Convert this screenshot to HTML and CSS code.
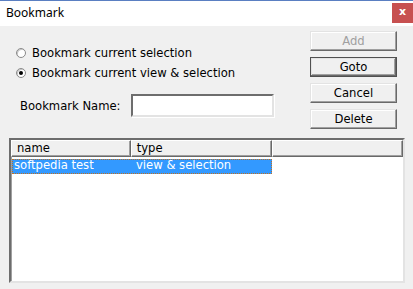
FILE: index.html
```html
<!DOCTYPE html>
<html>
<head>
<meta charset="utf-8">
<link rel="stylesheet" href="styles.css">
</head>
<body>
<div class="window">
  <div class="titlebar">
    <span class="title">Bookmark</span>
    <span class="close">x</span>
  </div>
  <div class="content">
    <div class="top">
      <div class="left">
        <label class="radio-row"><span class="radio"></span><span>Bookmark current selection</span></label>
        <label class="radio-row"><span class="radio checked"></span><span>Bookmark current view &amp; selection</span></label>
        <div class="name-row">
          <span class="name-label">Bookmark Name:</span>
          <span class="input"></span>
        </div>
      </div>
      <div class="buttons">
        <div class="btn disabled">Add</div>
        <div class="btn default">Goto</div>
        <div class="btn">Cancel</div>
        <div class="btn">Delete</div>
      </div>
    </div>
    <div class="list">
      <div class="header">
        <div class="hcell c1">name</div>
        <div class="hcell c2">type</div>
        <div class="hcell c3"></div>
      </div>
      <div class="row selected">
        <span class="cell c1">softpedia test</span>
        <span class="cell c2">view &amp; selection</span>
      </div>
    </div>
  </div>
</div>
</body>
</html>
```
FILE: styles.css
```css
* { box-sizing: border-box; }
html, body { margin: 0; padding: 0; }
body {
  width: 413px;
  height: 289px;
  overflow: hidden;
  background: #f0f0f0;
  font-family: "DejaVu Sans", sans-serif;
  font-size: 11.6px;
  color: #000;
}
.window { width: 413px; height: 289px; display: flex; flex-direction: column; }
.titlebar {
  height: 26px;
  background: #fff;
  border-top: 1px solid #5a7fc2;
  display: flex;
  align-items: flex-start;
  justify-content: space-between;
}
.title {
  font-family: "Noto Sans", sans-serif;
  font-size: 12px;
  margin: 4px 0 0 6px;
  line-height: 16px;
}
.close {
  width: 21px;
  height: 20px;
  margin-top: 2px;
  background: #c75050;
  color: #fff;
  font-family: "DejaVu Sans", sans-serif;
  font-weight: bold;
  font-size: 11px;
  line-height: 18px;
  text-align: center;
}
.content { padding: 5px 8px 6px 9px; display: flex; flex-direction: column; flex: 1; }
.top { display: flex; height: 102px; }
.left { width: 301px; padding-top: 12px; display: flex; flex-direction: column; }
.radio-row {
  height: 20px;
  display: flex;
  align-items: center;
  padding-left: 7px;
  gap: 6px;
  line-height: 14px;
}
.radio {
  width: 10px; height: 10px;
  border-radius: 50%;
  background: #fff;
  border: 1px solid #8a8a8a;
  box-shadow: inset 1px 1px 0 #c8c8c8;
  position: relative;
  flex: none;
}
.radio.checked::after {
  content: "";
  position: absolute;
  left: 2px; top: 2px;
  width: 4px; height: 4px;
  border-radius: 50%;
  background: #000;
}
.name-row {
  display: flex;
  align-items: center;
  margin-top: 11px;
  padding-left: 11px;
}
.name-label { width: 111px; }
.input {
  width: 143px;
  height: 23px;
  background: #fff;
  border-top: 2px solid #6d6d6d;
  border-left: 2px solid #6d6d6d;
  border-right: 2px solid #e3e3e3;
  border-bottom: 2px solid #e3e3e3;
  box-shadow: 1px 1px 0 #fff;
}
.buttons { display: flex; flex-direction: column; gap: 6px; }
.btn {
  width: 87px;
  height: 20px;
  background: #f0f0f0;
  border-top: 1px solid #e3e3e3;
  border-left: 1px solid #e3e3e3;
  border-right: 1px solid #696969;
  border-bottom: 1px solid #696969;
  box-shadow: inset -1px -1px 0 #a0a0a0, inset 1px 1px 0 #fff;
  text-align: center;
  line-height: 18px;
}
.btn.default {
  border: 1px solid #505050;
  box-shadow: inset -1px -1px 0 #696969, inset 1px 1px 0 #e3e3e3, inset -2px -2px 0 #a0a0a0;
}
.btn.disabled { color: #a0a0a0; }
.list {
  margin-top: 5px;
  height: 145px;
  width: 396px;
  background: #fff;
  border-top: 2px solid #6d6d6d;
  border-left: 2px solid #6d6d6d;
  border-right: 2px solid #e3e3e3;
  border-bottom: 2px solid #e3e3e3;
  box-shadow: inset 1px 1px 0 #a0a0a0;
}
.header { display: flex; height: 17px; }
.hcell {
  background: #f0f0f0;
  border-top: 1px solid #fff;
  border-left: 1px solid #fff;
  border-right: 1px solid #696969;
  border-bottom: 1px solid #696969;
  box-shadow: inset -1px -1px 0 #a0a0a0;
  line-height: 15px;
  padding-left: 5px;
}
.hcell.c1 { width: 120px; }
.hcell.c2 { width: 142px; }
.hcell.c3 { width: 131px; }
.row {
  display: flex;
  margin-top: 2px;
  margin-left: 1px;
  width: 260px;
  height: 15px;
  line-height: 13px;
}
.row.selected {
  background: #3399ff;
  color: #fff;
  outline: 1px dotted #c07020;
  outline-offset: -1px;
}
.cell.c1 { width: 124px; padding-left: 2px; }
.cell.c2 { padding-left: 0; }
```
